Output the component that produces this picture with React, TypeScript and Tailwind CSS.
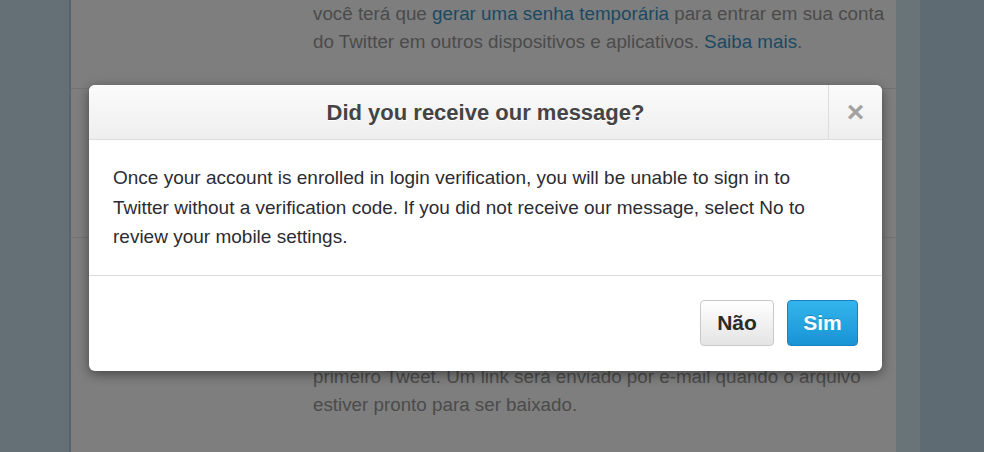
export default function App() {
  return (
    <div
      className="relative flex h-[452px] w-[984px] overflow-hidden bg-[#5f6b72]"
      style={{ fontFamily: '"Liberation Sans", Arial, sans-serif' }}
    >
      {/* left gutter */}
      <div className="h-full w-[69px] bg-[#646f76]" />
      <div className="h-full w-[2px] bg-[#5a6369]" />

      {/* dimmed settings panel */}
      <div className="flex h-full w-[825px] flex-col bg-[#7e7e7e] text-[18.8px] leading-[28px] text-[#4b4b4b]">
        <div className="h-[89px] border-b border-[#737373] pl-[242px]">
          <p className="whitespace-nowrap">
            você terá que <span className="text-[#1b4962]">gerar uma senha temporária</span> para entrar em sua conta
          </p>
          <p className="whitespace-nowrap">
            do Twitter em outros dispositivos e aplicativos. <span className="text-[#1b4962]">Saiba mais</span>.
          </p>
        </div>
        <div className="h-[149px] border-b border-[#737373]" />
        <div className="pl-[242px] pt-[125px]">
          <p className="whitespace-nowrap">primeiro Tweet. Um link será enviado por e-mail quando o arquivo</p>
          <p className="whitespace-nowrap">estiver pronto para ser baixado.</p>
        </div>
      </div>

      {/* right gutter */}
      <div className="h-full w-[24px] bg-[#697479]" />
      <div className="h-full flex-1 bg-[#5f6b72]" />

      {/* modal */}
      <div className="absolute left-[89px] top-[85px] flex w-[793px] flex-col rounded-[6px] bg-white shadow-[0_3px_12px_rgba(0,0,0,0.45)]">
        <div className="relative flex h-[55px] items-center justify-center rounded-t-[6px] border-b border-[#dcdcdc] bg-gradient-to-b from-[#fbfbfb] to-[#eeeeee]">
          <h1 className="text-[22px] font-bold text-[#444444] [text-shadow:0_1px_0_#ffffff]">
            Did you receive our message?
          </h1>
          <div className="absolute right-0 top-0 flex h-full w-[54px] items-center justify-center border-l border-[#dddddd]">
            <span className="text-[30px] font-bold leading-none text-[#a2a2a2]">×</span>
          </div>
        </div>
        <div className="border-b border-[#dcdcdc] px-[24px] pb-[23px] pt-[23px] text-[19px] leading-[29.5px] text-[#2c2c33]">
          <p className="whitespace-nowrap">
            Once your account is enrolled in login verification, you will be unable to sign in to
            <br />
            Twitter without a verification code. If you did not receive our message, select No to
            <br />
            review your mobile settings.
          </p>
        </div>
        <div className="flex justify-end gap-[13px] pb-[25px] pr-[24px] pt-[24px]">
          <button className="h-[46px] w-[74px] rounded-[4px] border border-[#c9c9c9] bg-gradient-to-b from-[#ffffff] to-[#e4e4e4] text-[21px] font-bold text-[#2b2b2b]">
            Não
          </button>
          <button className="h-[46px] w-[71px] rounded-[4px] border border-[#1a80c2] bg-gradient-to-b from-[#33b5ec] to-[#1893d5] text-[21px] font-bold text-white [text-shadow:0_-1px_0_rgba(0,0,0,0.2)]">
            Sim
          </button>
        </div>
      </div>
    </div>
  );
}
